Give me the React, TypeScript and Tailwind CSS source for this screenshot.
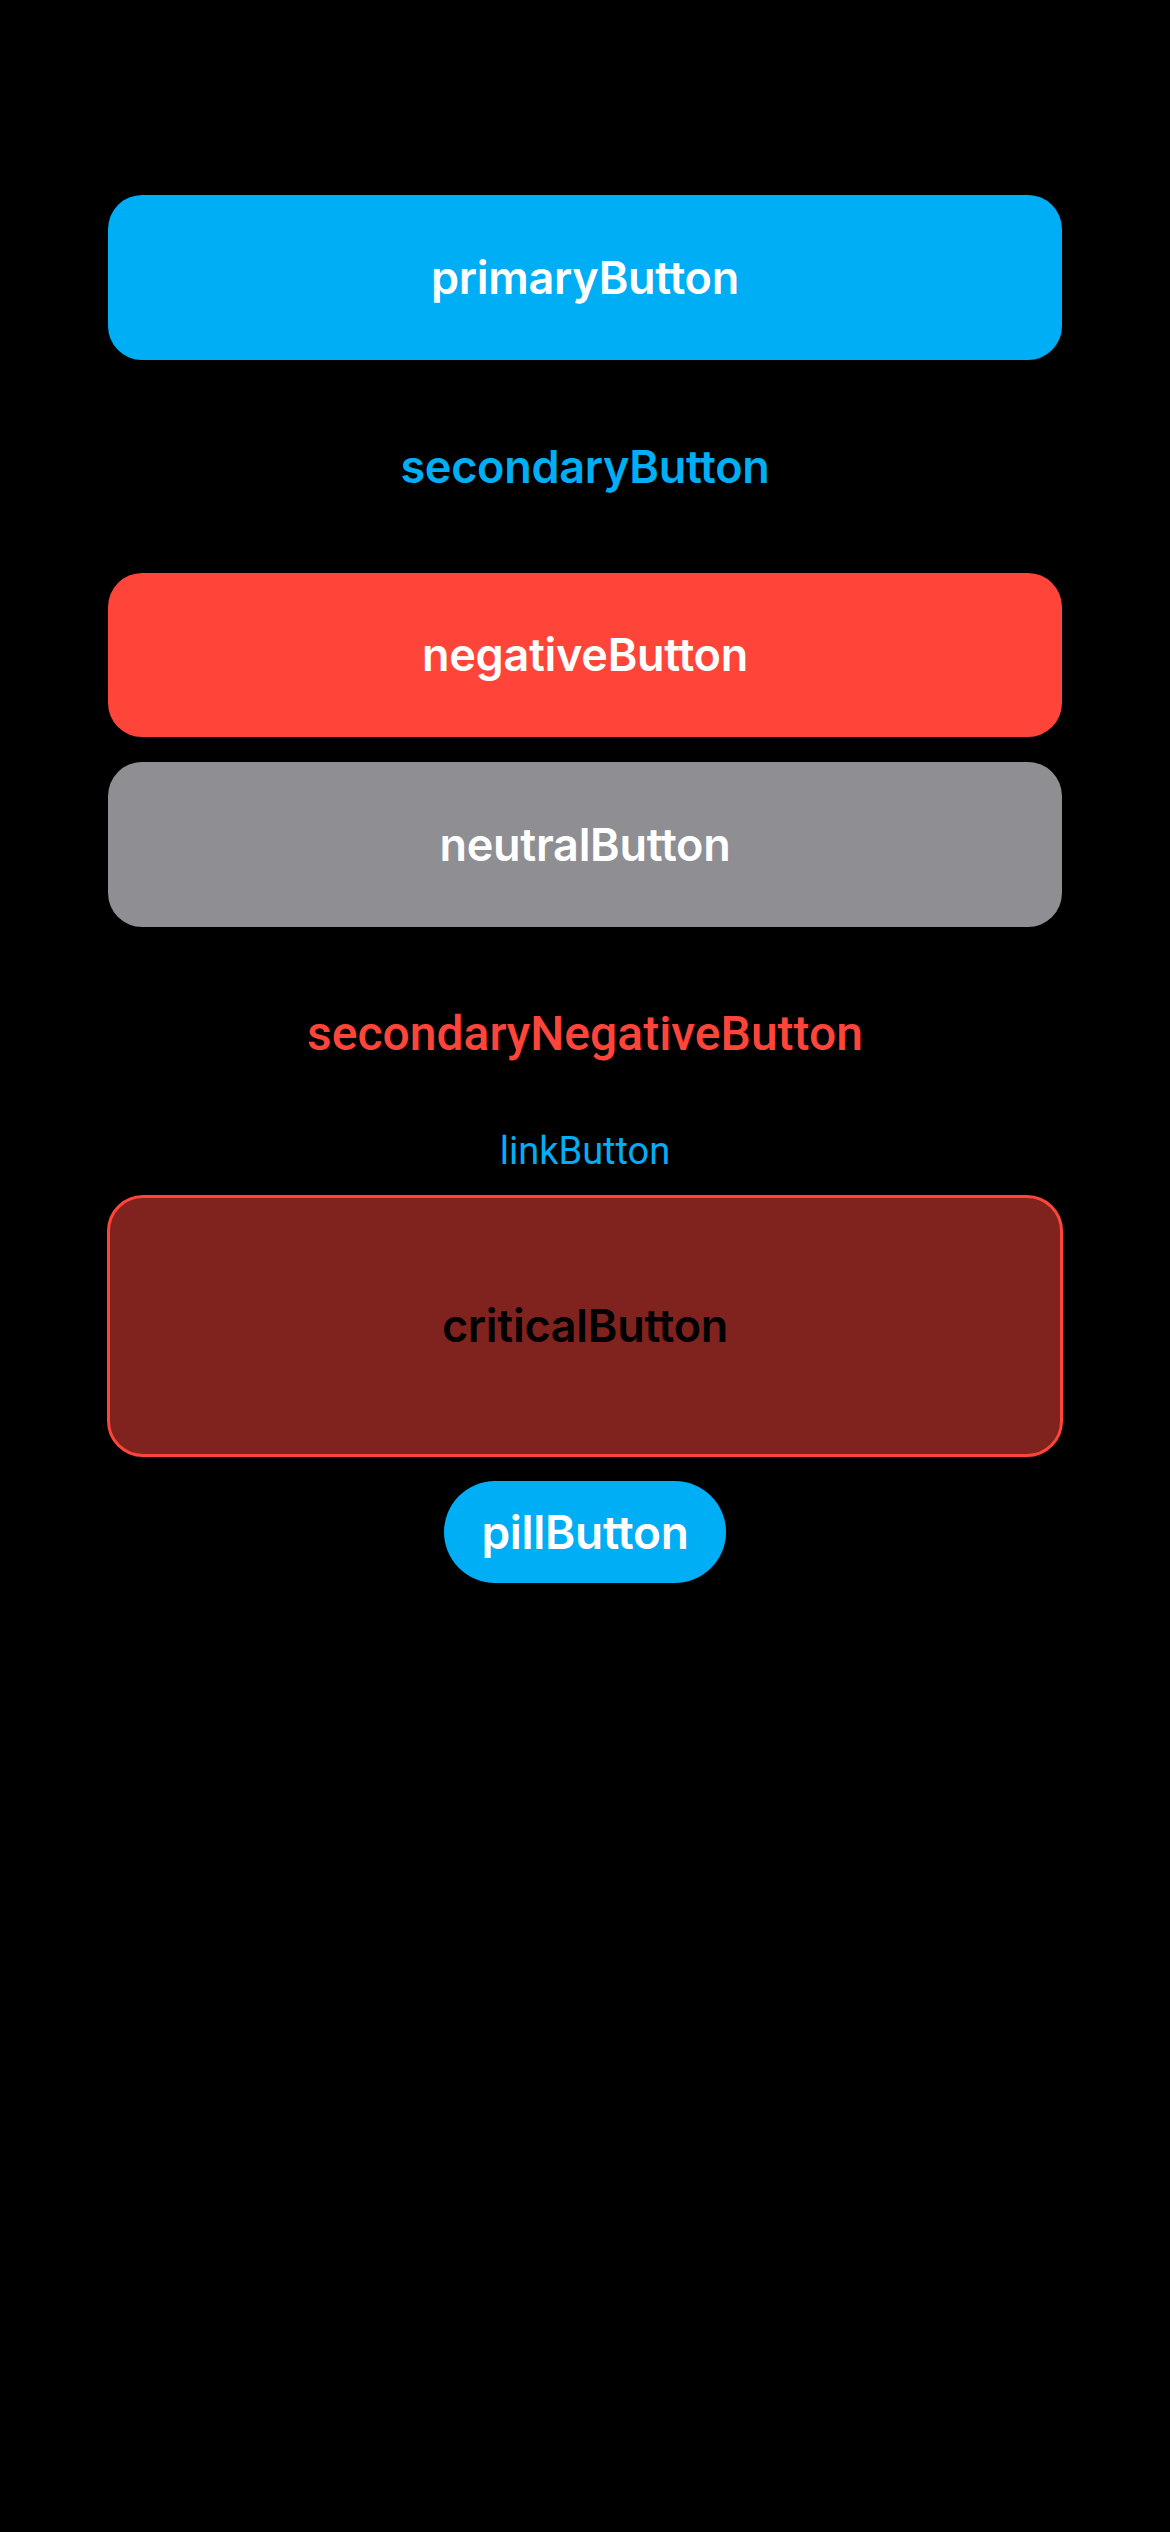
import React from 'react';

const sf = "font-['Inter','Noto_Sans',sans-serif]";
const roboto = "font-['Roboto','Noto_Sans',sans-serif]";

const App: React.FC = () => {
  return (
    <div className="min-h-[2532px] w-[1170px] bg-black">
      <div className="flex flex-col items-center px-[108px] pt-[195px]">
        {/* primary */}
        <button className={`${sf} flex h-[165px] w-full items-center justify-center rounded-[34px] bg-[#00aef5] text-[45px] font-semibold tracking-[-0.3px] text-white`}>
          primaryButton
        </button>

        {/* secondary */}
        <button className={`${sf} mt-6 flex h-[165px] w-full items-center justify-center text-[45px] font-semibold tracking-[-0.3px] text-[#00aef5]`}>
          secondaryButton
        </button>

        {/* negative */}
        <button className={`${sf} mt-6 flex h-[164px] w-full items-center justify-center rounded-[34px] bg-[#ff453a] text-[45px] font-semibold tracking-[-0.3px] text-white`}>
          negativeButton
        </button>

        {/* neutral */}
        <button className={`${sf} mt-[25px] flex h-[165px] w-full items-center justify-center rounded-[34px] bg-[#8e8e93] text-[45px] font-semibold tracking-[-0.3px] text-white`}>
          neutralButton
        </button>

        {/* secondary negative */}
        <button className={`${roboto} mt-6 flex h-[165px] w-full items-center justify-center text-[48px] font-medium text-[#ff453a]`}>
          secondaryNegativeButton
        </button>

        {/* link */}
        <button className={`${roboto} flex h-[70px] w-full items-center justify-center text-[38px] font-normal text-[#00aef5]`}>
          linkButton
        </button>

        {/* critical */}
        <button className={`${sf} mt-[9px] flex h-[262px] w-[956px] items-center justify-center rounded-[36px] border-[3px] border-[#ff453a] bg-[#80231f] text-[45px] font-semibold tracking-[-0.3px] text-black`}>
          criticalButton
        </button>

        {/* pill */}
        <button className={`${sf} mt-6 flex h-[102px] items-center justify-center rounded-full bg-[#00aef5] px-[37px] text-[46px] font-semibold tracking-[-0.3px] text-white`}>
          pillButton
        </button>
      </div>
    </div>
  );
};

export default App;
